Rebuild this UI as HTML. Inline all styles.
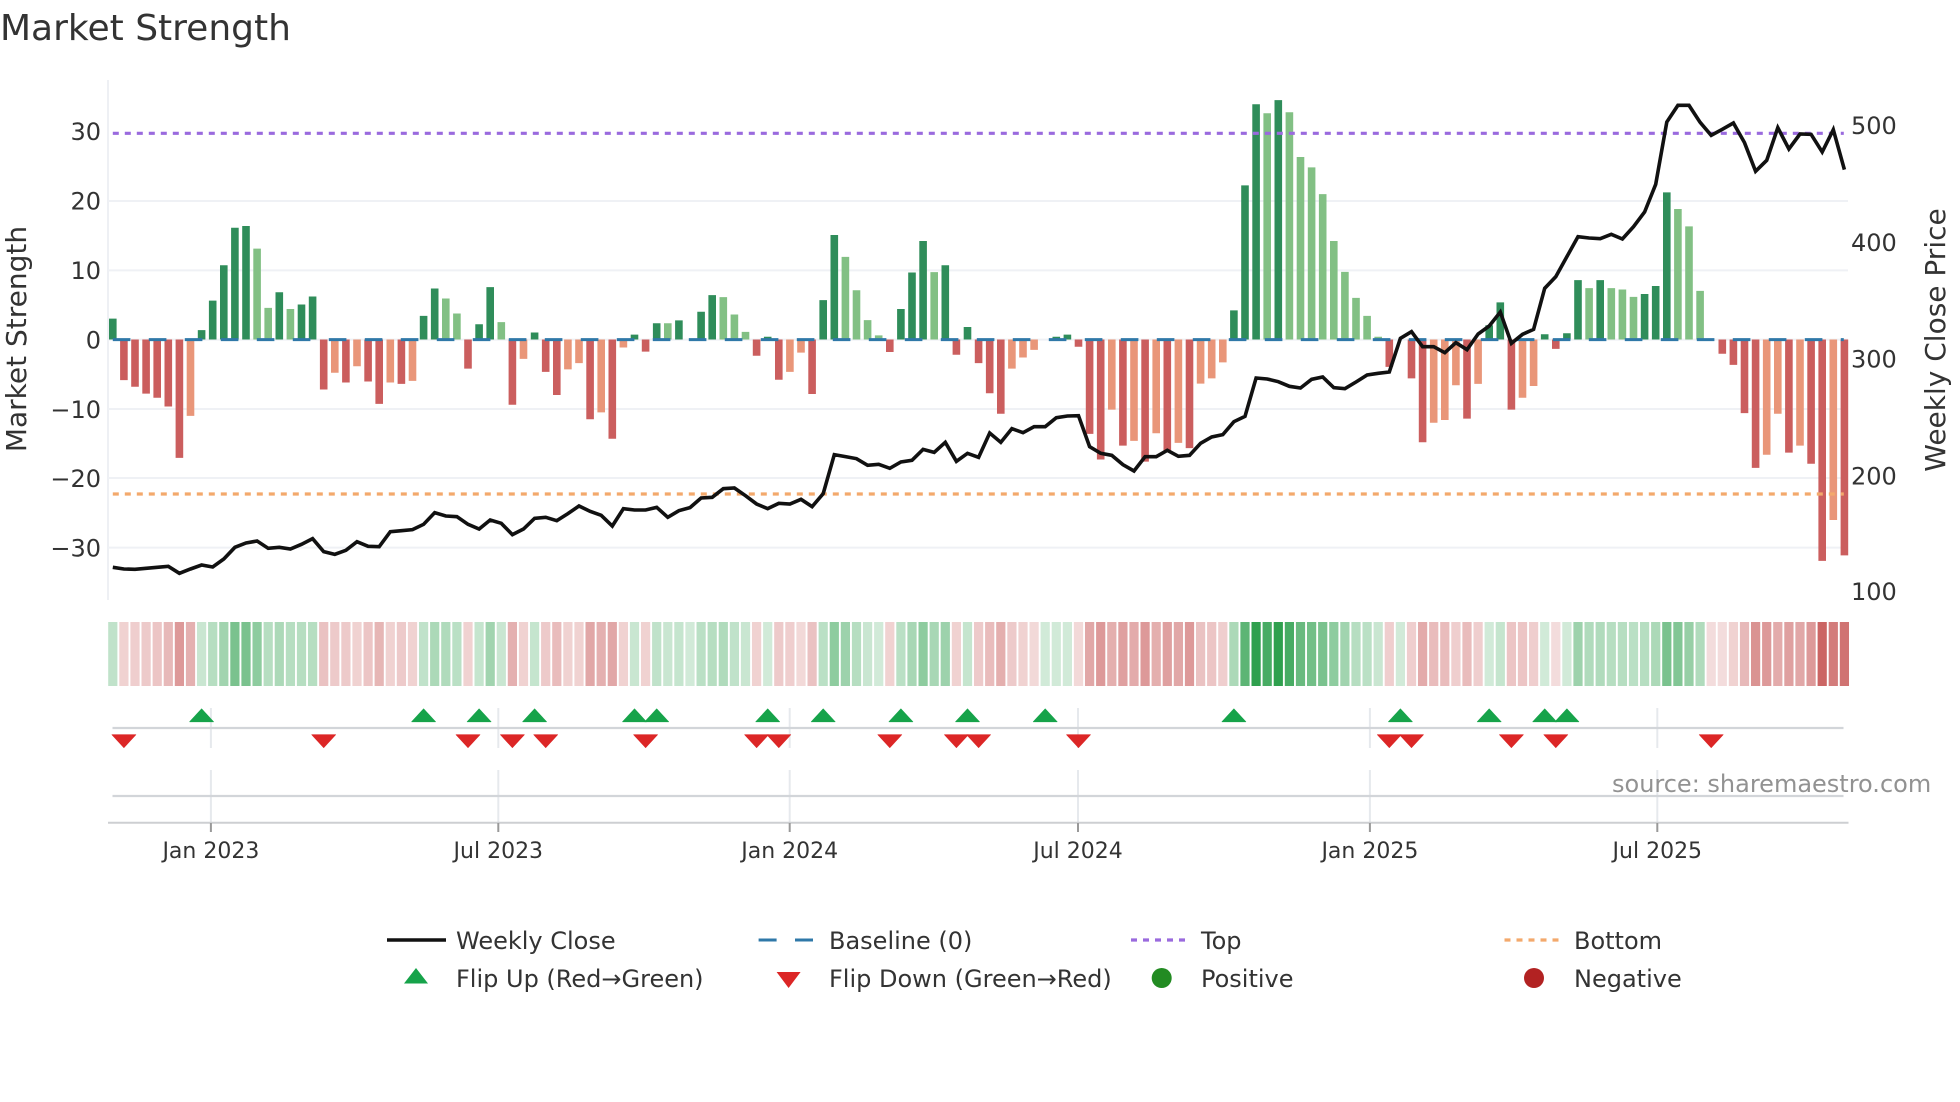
<!DOCTYPE html>
<html lang="en"><head><meta charset="utf-8"><title>Market Strength</title>
<style>
html,body{margin:0;padding:0;background:#fff;width:1960px;height:1102px;overflow:hidden}
svg{display:block}
text{font-family:"DejaVu Sans","Liberation Sans",sans-serif;fill:#333}
.t{font-size:24px}
.x{font-size:22px;text-anchor:middle}
.l{font-size:24px;text-anchor:end}
.ax{font-size:28px;text-anchor:middle}
</style></head><body>
<svg width="1960" height="1102" viewBox="0 0 1960 1102" xmlns="http://www.w3.org/2000/svg">
<defs>
<path id="u" d="M0 -6.5L12 6.5H-12Z" fill="#16a34a" stroke="#16a34a" stroke-width=".6" stroke-linejoin="round"/>
<path id="d" d="M-12 -6.5H12L0 6.5Z" fill="#dc2626" stroke="#dc2626" stroke-width=".6" stroke-linejoin="round"/>
</defs>
<text x="0" y="40" style="font-size:36px">Market Strength</text>

<!-- grid -->
<path d="M108 80V600" stroke="#eef0f4" stroke-width="2" fill="none"/>
<path d="M108 201H1848M108 270.4H1848M108 339.6H1848M108 409H1848M108 478H1848M108 547.6H1848" stroke="#eff1f5" stroke-width="2" fill="none"/>

<!-- bars -->
<g transform="translate(112.8,339.5) scale(11.1,-6.94)" fill="none" stroke-width=".685">
<path stroke="#2f8d5a" d="M0 0V3M8 0V1.35M9 0V5.6M10 0V10.7M11 0V16.1M12 0V16.35M15 0V6.8M17 0V5.05M18 0V6.2M28 0V3.4M29 0V7.35M33 0V2.2M34 0V7.55M38 0V1M47 0V.7M49 0V2.35M51 0V2.75M53 0V4M54 0V6.4M59 0V.4M64 0V5.67M65 0V15.05M71 0V4.4M72 0V9.66M73 0V14.2M75 0V10.7M77 0V1.8M85 0V.4M86 0V.7M101 0V4.2M102 0V22.2M103 0V33.9M105 0V34.5M124 0V2.05M125 0V5.35M129 0V.75M131 0V.9M132 0V8.55M134 0V8.55M138 0V6.55M139 0V7.7M140 0V21.2"/>
<path stroke="#82c084" d="M13 0V13.1M14 0V4.56M16 0V4.4M30 0V5.9M31 0V3.75M35 0V2.5M50 0V2.35M55 0V6.1M56 0V3.6M57 0V1.1M66 0V11.9M67 0V7.1M68 0V2.8M69 0V.6M74 0V9.7M104 0V32.6M106 0V32.75M107 0V26.3M108 0V24.8M109 0V20.95M110 0V14.2M111 0V9.75M112 0V6M113 0V3.4M114 0V.4M133 0V7.4M135 0V7.4M136 0V7.2M137 0V6.15M141 0V18.8M142 0V16.3M143 0V7"/>
<path stroke="#cb5e5e" d="M1 0V-5.86M2 0V-6.8M3 0V-7.8M4 0V-8.4M5 0V-9.65M6 0V-17.05M19 0V-7.2M21 0V-6.2M23 0V-6.05M24 0V-9.27M26 0V-6.4M32 0V-4.2M36 0V-9.4M39 0V-4.66M40 0V-8M43 0V-11.5M45 0V-14.3M48 0V-1.75M58 0V-2.35M60 0V-5.8M63 0V-7.85M70 0V-1.8M76 0V-2.2M78 0V-3.4M79 0V-7.75M80 0V-10.7M87 0V-1.05M88 0V-13.6M89 0V-17.3M91 0V-15.3M93 0V-17.6M95 0V-16M97 0V-15.65M115 0V-3.95M117 0V-5.6M118 0V-14.8M122 0V-11.4M126 0V-10.1M130 0V-1.35M145 0V-2.05M146 0V-3.65M147 0V-10.6M148 0V-18.5M151 0V-16.3M153 0V-17.9M154 0V-31.9M156 0V-31.1"/>
<path stroke="#e99679" d="M7 0V-11M20 0V-4.8M22 0V-3.85M25 0V-6.2M27 0V-5.96M37 0V-2.8M41 0V-4.3M42 0V-3.4M44 0V-10.5M46 0V-1.15M61 0V-4.66M62 0V-1.9M81 0V-4.2M82 0V-2.6M83 0V-1.5M90 0V-10.1M92 0V-14.6M94 0V-13.5M96 0V-14.9M98 0V-6.35M99 0V-5.6M100 0V-3.3M119 0V-12M120 0V-11.6M121 0V-6.6M123 0V-6.4M127 0V-8.4M128 0V-6.7M149 0V-16.6M150 0V-10.7M152 0V-15.3M155 0V-26"/>
</g>

<!-- reference lines -->
<path d="M112.8 339.6H1843.8" stroke="#2f78a8" stroke-width="3" stroke-dasharray="17.6 18.4" fill="none"/>
<path d="M112.8 133.3H1843.8" stroke="#9a6ade" stroke-width="3.2" stroke-dasharray="6 6" fill="none"/>
<path d="M112.8 494H1843.8" stroke="#f3a96c" stroke-width="3.2" stroke-dasharray="6 6" fill="none"/>

<!-- price -->
<g transform="translate(112.8,320) scale(11.1,.33333)">
<polyline fill="none" stroke="#111" stroke-width="3.6" stroke-linejoin="miter" points="0,742 1,747 2,748 3,745 4,742 5,739 6,760 7,747 8,735 9,741 10,717 11,682 12,669 13,663 14,685 15,682 16,687 17,673 18,656 19,695 20,703 21,691 22,665 23,679 24,680 25,635 26,632 27,629 28,613 29,578 30,588 31,590 32,613 33,627 34,600 35,610 36,644 37,627 38,595 39,592 40,602 41,581 42,558 43,574 44,586 45,618 46,566 47,570 48,570 49,562 50,592 51,572 52,563 53,534 54,532 55,506 56,504 57,527 58,552 59,566 60,550 61,552 62,538 63,560 64,521 65,404 66,410 67,416 68,436 69,433 70,445 71,426 72,421 73,388 74,397 75,367 76,424 77,400 78,412 79,339 80,367 81,326 82,338 83,320 84,320 85,293 86,288 87,287 88,380 89,400 90,406 91,434 92,453 93,410 94,410 95,391 96,409 97,406 98,370 99,351 100,344 101,305 102,289 103,174 104,177 105,185 106,199 107,204 108,178 109,171 110,203 111,206 112,186 113,165 114,160 115,156 116,55 117,35 118,80 119,80 120,98 121,68 122,89 123,42 124,18 125,-24 126,70 127,43 128,28 129,-95 130,-130 131,-190 132,-250 133,-246 134,-244 135,-257 136,-243 137,-280 138,-324 139,-407 140,-594 141,-644 142,-644 143,-593 144,-554 145,-572 146,-591 147,-532 148,-446 149,-479 150,-577 151,-513 152,-558 153,-557 154,-504 155,-571 156,-451" style="vector-effect:non-scaling-stroke"/>
</g>

<!-- y labels -->
<text class="l" x="101" y="140">30</text>
<text class="l" x="101" y="209.5">20</text>
<text class="l" x="101" y="279">10</text>
<text class="l" x="101" y="348.5">0</text>
<text class="l" x="101" y="418">−10</text>
<text class="l" x="101" y="487">−20</text>
<text class="l" x="101" y="556.5">−30</text>
<text class="t" x="1851" y="134">500</text>
<text class="t" x="1851" y="251">400</text>
<text class="t" x="1851" y="367.3">300</text>
<text class="t" x="1851" y="484.3">200</text>
<text class="t" x="1851" y="600">100</text>
<text class="ax" transform="translate(26,339) rotate(-90)">Market Strength</text>
<text class="ax" transform="translate(1945,340) rotate(-90)">Weekly Close Price</text>

<!-- heat strip -->
<g transform="translate(112.8,622) scale(11.1,64)" fill="none" stroke-width=".83">
<g stroke="#2fa04e">
<path opacity=".22" d="M52 0v1M59 0v1M69 0v1M84 0v1M85 0v1M86 0v1M116 0v1M124 0v1M129 0v1M131 0v1"/>
<path opacity=".26" d="M8 0v1M35 0v1M47 0v1M50 0v1M57 0v1M68 0v1M114 0v1"/>
<path opacity=".28" d="M33 0v1M38 0v1M51 0v1M77 0v1M125 0v1"/>
<path opacity=".3" d="M0 0v1M28 0v1M49 0v1M56 0v1"/>
<path opacity=".33" d="M31 0v1M53 0v1M64 0v1M71 0v1M113 0v1M137 0v1"/>
<path opacity=".35" d="M9 0v1M14 0v1M16 0v1M17 0v1M18 0v1M54 0v1M67 0v1M112 0v1M135 0v1M136 0v1M138 0v1"/>
<path opacity=".38" d="M30 0v1M55 0v1M133 0v1M134 0v1M143 0v1"/>
<path opacity=".4" d="M15 0v1M29 0v1M101 0v1M139 0v1"/>
<path opacity=".42" d="M72 0v1M74 0v1"/>
<path opacity=".45" d="M10 0v1M34 0v1M111 0v1"/>
<path opacity=".47" d="M66 0v1M75 0v1M132 0v1"/>
<path opacity=".5" d="M142 0v1"/>
<path opacity=".54" d="M13 0v1M65 0v1M73 0v1M110 0v1"/>
<path opacity=".6" d="M141 0v1"/>
<path opacity=".64" d="M11 0v1M12 0v1M109 0v1M140 0v1"/>
<path opacity=".68" d="M108 0v1"/>
<path opacity=".72" d="M107 0v1"/>
<path opacity=".78" d="M102 0v1"/>
<path opacity=".88" d="M104 0v1M106 0v1"/>
<path opacity="1" d="M103 0v1M105 0v1"/>
</g>
<g stroke="#c4504f">
<path opacity=".2" d="M130 0v1M144 0v1M145 0v1"/>
<path opacity=".22" d="M62 0v1M83 0v1M87 0v1"/>
<path opacity=".26" d="M1 0v1M22 0v1M25 0v1M27 0v1M32 0v1M37 0v1M41 0v1M42 0v1M46 0v1M48 0v1M58 0v1M70 0v1M76 0v1M82 0v1M146 0v1"/>
<path opacity=".28" d="M2 0v1M61 0v1M100 0v1M115 0v1M117 0v1M121 0v1M123 0v1M128 0v1"/>
<path opacity=".3" d="M3 0v1M20 0v1M21 0v1M26 0v1M39 0v1M60 0v1M78 0v1M81 0v1"/>
<path opacity=".33" d="M4 0v1M23 0v1M99 0v1M126 0v1M127 0v1"/>
<path opacity=".35" d="M19 0v1M63 0v1M98 0v1"/>
<path opacity=".38" d="M40 0v1M79 0v1M119 0v1M120 0v1M122 0v1"/>
<path opacity=".4" d="M5 0v1M147 0v1"/>
<path opacity=".42" d="M24 0v1"/>
<path opacity=".45" d="M7 0v1M36 0v1M44 0v1"/>
<path opacity=".46" d="M80 0v1M90 0v1M94 0v1"/>
<path opacity=".48" d="M92 0v1M118 0v1M150 0v1"/>
<path opacity=".5" d="M43 0v1M45 0v1M88 0v1M96 0v1M152 0v1"/>
<path opacity=".54" d="M91 0v1M95 0v1M151 0v1"/>
<path opacity=".58" d="M6 0v1M89 0v1M93 0v1M97 0v1M149 0v1M153 0v1"/>
<path opacity=".62" d="M148 0v1"/>
<path opacity=".75" d="M155 0v1"/>
<path opacity=".8" d="M156 0v1"/>
<path opacity=".88" d="M154 0v1"/>
</g>
</g>

<!-- lower panels -->
<path d="M210.9 708V748M498.3 708V748M789.7 708V748M1078 708V748M1369.9 708V748M1657.3 708V748M210.9 770V822M498.3 770V822M789.7 770V822M1078 770V822M1369.9 770V822M1657.3 770V822" stroke="#e6e9ed" stroke-width="2" fill="none"/>
<path d="M112.5 728H1843.5M112.5 796H1843.5" stroke="#d2d5d9" stroke-width="2.2" fill="none"/>
<path d="M108 822.7H1848.5" stroke="#cdcfd2" stroke-width="2" fill="none"/>
<path d="M210.9 823V832M498.3 823V832M789.7 823V832M1078 823V832M1369.9 823V832M1657.3 823V832" stroke="#999" stroke-width="2" fill="none"/>

<!-- flip markers -->
<use href="#u" x="201.6" y="715.3"/><use href="#u" x="423.6" y="715.3"/><use href="#u" x="479.1" y="715.3"/><use href="#u" x="534.6" y="715.3"/><use href="#u" x="634.5" y="715.3"/><use href="#u" x="656.7" y="715.3"/><use href="#u" x="767.7" y="715.3"/><use href="#u" x="823.2" y="715.3"/><use href="#u" x="900.9" y="715.3"/><use href="#u" x="967.5" y="715.3"/><use href="#u" x="1045.2" y="715.3"/><use href="#u" x="1233.9" y="715.3"/><use href="#u" x="1400.4" y="715.3"/><use href="#u" x="1489.2" y="715.3"/><use href="#u" x="1544.7" y="715.3"/><use href="#u" x="1566.9" y="715.3"/>
<use href="#d" x="123.9" y="741.2"/><use href="#d" x="323.7" y="741.2"/><use href="#d" x="468" y="741.2"/><use href="#d" x="512.4" y="741.2"/><use href="#d" x="545.7" y="741.2"/><use href="#d" x="645.6" y="741.2"/><use href="#d" x="756.6" y="741.2"/><use href="#d" x="778.8" y="741.2"/><use href="#d" x="889.8" y="741.2"/><use href="#d" x="956.4" y="741.2"/><use href="#d" x="978.6" y="741.2"/><use href="#d" x="1078.5" y="741.2"/><use href="#d" x="1389.3" y="741.2"/><use href="#d" x="1411.5" y="741.2"/><use href="#d" x="1511.4" y="741.2"/><use href="#d" x="1555.8" y="741.2"/><use href="#d" x="1711.2" y="741.2"/>

<text class="t" x="1612" y="792" style="fill:#929292">source: sharemaestro.com</text>

<!-- x labels -->
<text class="x" x="210.9" y="858">Jan 2023</text>
<text class="x" x="498.3" y="858">Jul 2023</text>
<text class="x" x="789.7" y="858">Jan 2024</text>
<text class="x" x="1078" y="858">Jul 2024</text>
<text class="x" x="1369.9" y="858">Jan 2025</text>
<text class="x" x="1657.3" y="858">Jul 2025</text>

<!-- legend -->
<path d="M387 940H446" stroke="#111" stroke-width="3.6" fill="none"/>
<path d="M758.6 940H814" stroke="#2f78a8" stroke-width="3" stroke-dasharray="18 18.4" fill="none"/>
<path d="M1131 940H1187" stroke="#9a6ade" stroke-width="3.2" stroke-dasharray="6 6" fill="none"/>
<path d="M1504.5 940H1561" stroke="#f3a96c" stroke-width="3.2" stroke-dasharray="6 6" fill="none"/>
<path d="M416 968L428 983.5H404Z" fill="#16a34a"/>
<path d="M776.6 972H800.6L788.6 988Z" fill="#dc2626"/>
<circle cx="1161.7" cy="978" r="10" fill="#228b22"/>
<circle cx="1534" cy="978" r="10" fill="#b22222"/>
<text class="t" x="456" y="949">Weekly Close</text>
<text class="t" x="829" y="949">Baseline (0)</text>
<text class="t" x="1201" y="949">Top</text>
<text class="t" x="1574" y="949">Bottom</text>
<text class="t" x="456" y="987">Flip Up (Red→Green)</text>
<text class="t" x="829" y="987">Flip Down (Green→Red)</text>
<text class="t" x="1201" y="987">Positive</text>
<text class="t" x="1574" y="987">Negative</text>
</svg>
</body></html>
